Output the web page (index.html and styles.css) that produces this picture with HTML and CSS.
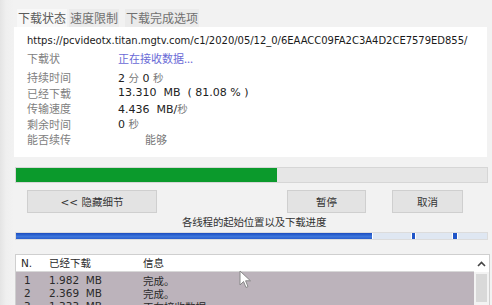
FILE: index.html
```html
<!DOCTYPE html>
<html>
<head>
<meta charset="utf-8">
<link rel="stylesheet" href="styles.css">
</head>
<body>
<div class="window">
  <div class="tabs">
    <div class="tab active">下载状态</div>
    <div class="tab">速度限制</div>
    <div class="tab">下载完成选项</div>
  </div>
  <div class="panel">
    <div class="url">https://pcvideotx.titan.mgtv.com/c1/2020/05/12_0/6EAACC09FA2C3A4D2CE7579ED855/</div>
    <div class="row status"><span class="label">下载状</span><span class="busy">正在接收数据...</span></div>
    <div class="rows">
      <div class="row"><span class="label">持续时间</span><span class="val">2 <i>分</i> 0 <i>秒</i></span></div>
      <div class="row"><span class="label">已经下载</span><span class="val">13.310 &nbsp;MB &nbsp;( 81.08 % )</span></div>
      <div class="row"><span class="label">传输速度</span><span class="val">4.436 &nbsp;MB/<i>秒</i></span></div>
      <div class="row"><span class="label">剩余时间</span><span class="val">0 <i>秒</i></span></div>
      <div class="row"><span class="label">能否续传</span><span class="val can">能够</span></div>
    </div>
  </div>
  <div class="progress"><div class="fill" style="width:55.5%"></div></div>
  <div class="buttons">
    <div class="btn hide">&lt;&lt; 隐藏细节</div>
    <div class="btn pause">暂停</div>
    <div class="btn cancel">取消</div>
  </div>
  <div class="caption">各线程的起始位置以及下载进度</div>
  <div class="threads">
    <div class="seg done" style="width:357px"></div>
    <div class="seg" style="width:39px"></div>
    <div class="seg mark" style="width:4px"></div>
    <div class="seg" style="width:37px"></div>
    <div class="seg mark" style="width:5px"></div>
    <div class="seg rest"></div>
  </div>
  <div class="list">
    <div class="cols">
      <div class="head line"><span class="c1">N.</span><span class="c2">已经下载</span><span class="c3">信息</span></div>
      <div class="body">
        <div class="line"><span class="c1">1</span><span class="c2">1.982 &nbsp;MB</span><span class="c3">完成。</span></div>
        <div class="line"><span class="c1">2</span><span class="c2">2.369 &nbsp;MB</span><span class="c3">完成。</span></div>
        <div class="line"><span class="c1">3</span><span class="c2">1.333 &nbsp;MB</span><span class="c3">正在接收数据</span></div>
      </div>
    </div>
    <div class="scroll">
      <div class="up">
        <svg width="9" height="6" viewBox="0 0 9 6"><path d="M1 5 L4.5 1.5 L8 5" fill="none" stroke="#444" stroke-width="1.6"/></svg>
      </div>
      <div class="thumb"></div>
    </div>
  </div>
</div>
<svg class="cursor" width="13" height="19" viewBox="0 0 13 19"><path d="M1 1 L1 15 L4.5 11.5 L7 17.5 L9 16.6 L6.6 10.8 L11.5 10.8 Z" fill="#fff" stroke="#888" stroke-width="1"/></svg>
</body>
</html>
```
FILE: styles.css
```css
html, body {
  margin: 0;
  padding: 0;
}
body {
  width: 492px;
  height: 305px;
  overflow: hidden;
  background: #f1f1f1;
  font-family: "Noto Sans CJK SC", sans-serif;
  position: relative;
}
.window {
  display: flex;
  flex-direction: column;
  padding: 0 4px 0 14px;
  background: linear-gradient(to right, #e4e4e4 0, #efefef 6px, #f2f2f2 14px);
  height: 305px;
  box-sizing: border-box;
}
.tabs {
  display: flex;
  margin-top: 9px;
  height: 18px;
  padding-left: 3px;
  gap: 2px;
}
.tab {
  font-size: 12px;
  line-height: 18px;
  color: #707070;
  padding: 0 1px;
  background: #ebebeb;
}
.tab.active {
  background: #f8f8f8;
  color: #5a5a5a;
}
.tab:nth-child(3) {
  margin-left: 4px;
}
.panel {
  background: #fff;
  height: 130px;
  width: 473px;
  box-sizing: border-box;
  padding: 7px 0 0 13px;
  display: flex;
  flex-direction: column;
}
.url {
  font-family: "DejaVu Sans", sans-serif;
  font-size: 10px;
  letter-spacing: -0.02px;
  line-height: 14px;
  color: #1a1a1a;
  white-space: nowrap;
}
.row {
  display: flex;
  height: 15.5px;
  align-items: center;
  font-size: 11px;
}
.status {
  margin-top: 2px;
}
.rows {
  margin-top: 4px;
  display: flex;
  flex-direction: column;
}
.label {
  width: 91px;
  color: #808080;
  font-size: 11px;
}
.busy {
  color: #6a6ad6;
  font-size: 11px;
}
.val {
  font-family: "DejaVu Sans", sans-serif;
  font-size: 11px;
  color: #222;
}
.val i {
  font-style: normal;
  font-family: "Noto Sans CJK SC", sans-serif;
  color: #777;
  font-size: 10.5px;
}
.val.can {
  font-family: "Noto Sans CJK SC", sans-serif;
  color: #777;
  padding-left: 27px;
}
.progress {
  margin-top: 10px;
  margin-left: 1px;
  width: 473px;
  height: 16px;
  background: #e6e6e6;
  border: 1px solid #d6d6d6;
  box-sizing: border-box;
}
.fill {
  height: 100%;
  background: #0b9a2c;
}
.buttons {
  display: flex;
  margin-top: 7px;
  height: 23px;
}
.btn {
  height: 23px;
  box-sizing: border-box;
  border: 1px solid #cfcfcf;
  background: #e3e3e3;
  font-size: 10.5px;
  color: #333;
  display: flex;
  align-items: center;
  justify-content: center;
}
.hide {
  margin-left: 13px;
  width: 130px;
  font-family: "DejaVu Sans", "Noto Sans CJK SC", sans-serif;
}
.pause {
  margin-left: 130px;
  width: 79px;
}
.cancel {
  margin-left: 26px;
  width: 71px;
}
.caption {
  font-size: 10.5px;
  line-height: 13px;
  height: 13px;
  margin-top: 2px;
  color: #333;
  padding-left: 168px;
  letter-spacing: -0.2px;
}
.threads {
  margin-top: 4px;
  margin-left: 1px;
  width: 473px;
  height: 8px;
  display: flex;
  border: 1px solid #dcdcdc;
  box-sizing: border-box;
  background: #fff;
}
.seg {
  height: 100%;
  background: #dfe7f2;
  border-right: 1px solid #fff;
  box-sizing: border-box;
}
.seg.done {
  background: linear-gradient(#1b4cc0, #3e77dc 60%, #2a5dcc);
}
.seg.mark {
  background: #1f55c8;
}
.seg.rest {
  flex: 1;
  border-right: none;
}
.list {
  margin-top: 14px;
  margin-left: 1px;
  width: 473px;
  flex: 1;
  border: 1px solid #cfcfcf;
  border-bottom: none;
  display: flex;
  background: #fff;
  overflow: hidden;
}
.cols {
  flex: 1;
  display: flex;
  flex-direction: column;
}
.line {
  display: flex;
  height: 13px;
  line-height: 13px;
  align-items: center;
  font-size: 10.5px;
  color: #2a2a2a;
  white-space: nowrap;
}
.head {
  height: 16px;
  line-height: 16px;
  background: #fff;
  border-bottom: 1px solid #d8d8d8;
}
.body {
  flex: 1;
  background: #bcb3bb;
  padding-top: 2px;
}
.c1 {
  width: 33px;
  padding-left: 5px;
  box-sizing: border-box;
  font-family: "DejaVu Sans", sans-serif;
}
.body .c1 {
  padding-left: 8px;
}
.c2 {
  width: 94px;
  font-family: "DejaVu Sans", "Noto Sans CJK SC", sans-serif;
}
.head .c2 {
  font-family: "Noto Sans CJK SC", sans-serif;
}
.c3 {
  flex: 1;
}
.scroll {
  width: 15px;
  display: flex;
  flex-direction: column;
  background: #f3f3f3;
}
.up {
  height: 17px;
  background: #fff;
  display: flex;
  align-items: center;
  justify-content: center;
}
.thumb {
  margin: 2px 2px 0;
  height: 28px;
  background: #d9d9d9;
}
.cursor {
  position: absolute;
  left: 239px;
  top: 270px;
}
```
